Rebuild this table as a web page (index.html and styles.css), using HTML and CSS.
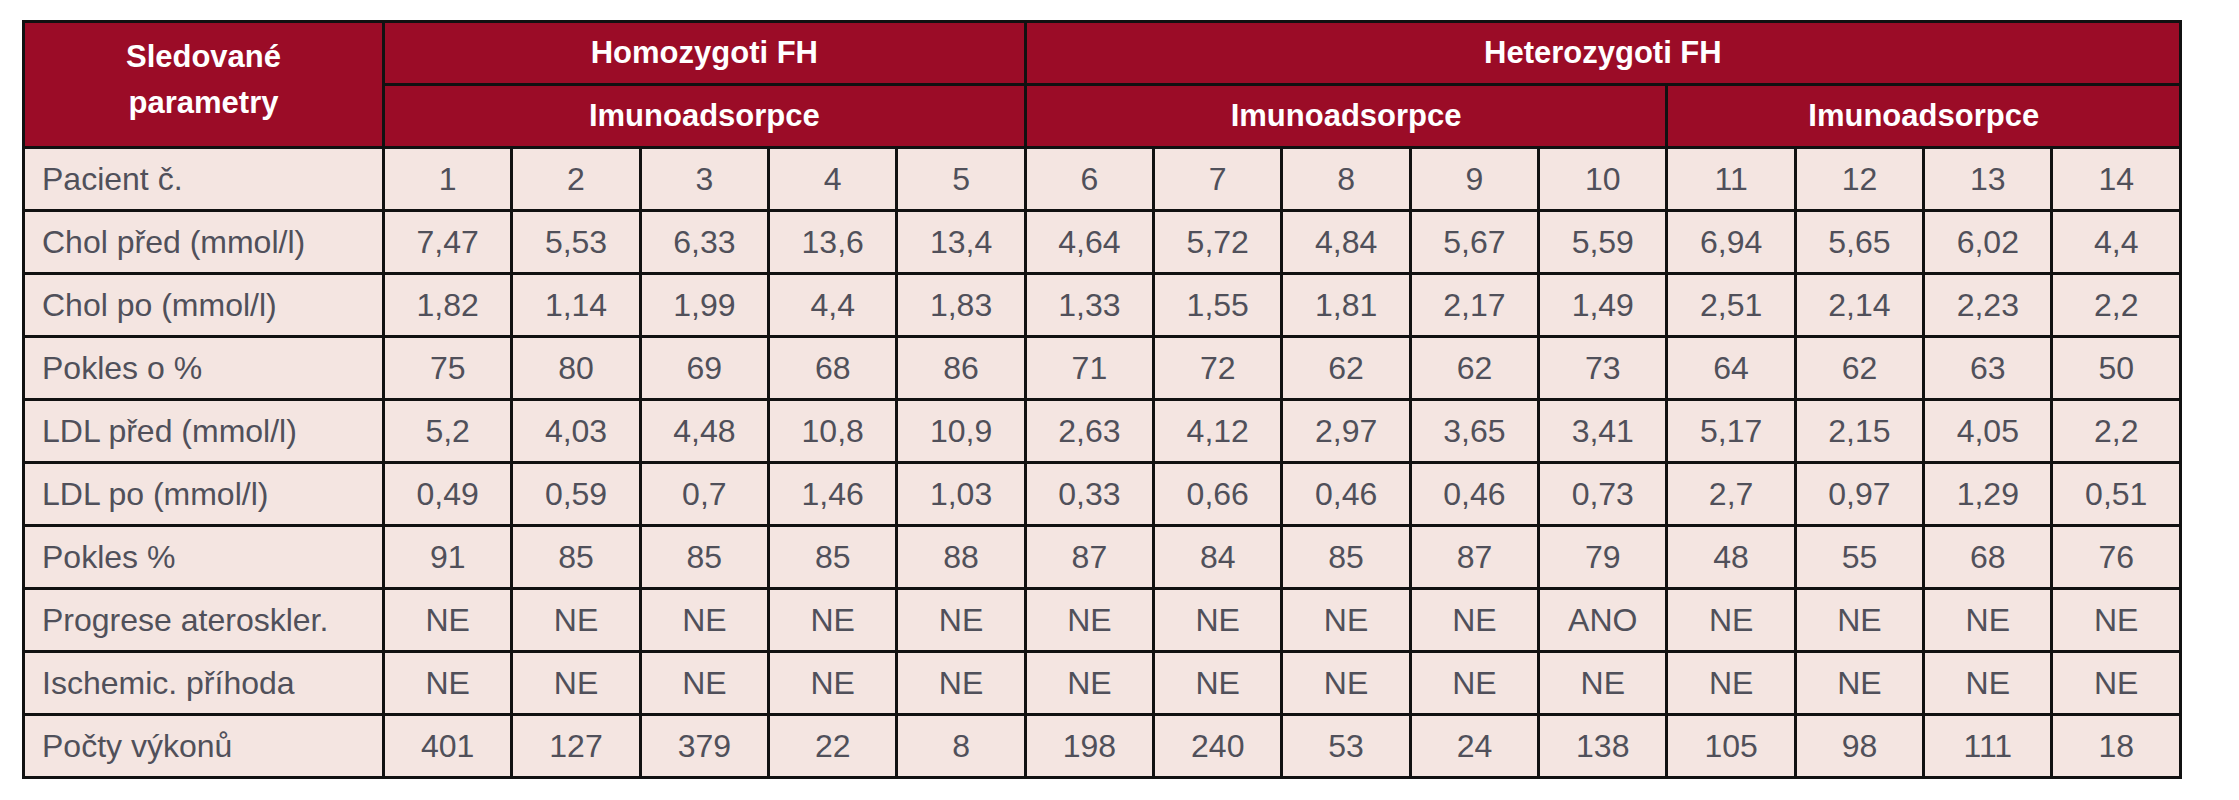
FILE: index.html
```html
<!DOCTYPE html>
<html lang="cs">
<head>
<meta charset="utf-8">
<link rel="stylesheet" href="styles.css">
</head>
<body>
<table class="data">
  <colgroup>
    <col class="c-label">
    <col span="14">
  </colgroup>
  <thead>
    <tr>
      <th rowspan="2" class="h-label">Sledované<br>parametry</th>
      <th colspan="5">Homozygoti FH</th>
      <th colspan="9">Heterozygoti FH</th>
    </tr>
    <tr>
      <th colspan="5">Imunoadsorpce</th>
      <th colspan="5">Imunoadsorpce</th>
      <th colspan="4">Imunoadsorpce</th>
    </tr>
  </thead>
  <tbody>
    <tr><td>Pacient č.</td><td>1</td><td>2</td><td>3</td><td>4</td><td>5</td><td>6</td><td>7</td><td>8</td><td>9</td><td>10</td><td>11</td><td>12</td><td>13</td><td>14</td></tr>
    <tr><td>Chol před (mmol/l)</td><td>7,47</td><td>5,53</td><td>6,33</td><td>13,6</td><td>13,4</td><td>4,64</td><td>5,72</td><td>4,84</td><td>5,67</td><td>5,59</td><td>6,94</td><td>5,65</td><td>6,02</td><td>4,4</td></tr>
    <tr><td>Chol po (mmol/l)</td><td>1,82</td><td>1,14</td><td>1,99</td><td>4,4</td><td>1,83</td><td>1,33</td><td>1,55</td><td>1,81</td><td>2,17</td><td>1,49</td><td>2,51</td><td>2,14</td><td>2,23</td><td>2,2</td></tr>
    <tr><td>Pokles o %</td><td>75</td><td>80</td><td>69</td><td>68</td><td>86</td><td>71</td><td>72</td><td>62</td><td>62</td><td>73</td><td>64</td><td>62</td><td>63</td><td>50</td></tr>
    <tr><td>LDL před (mmol/l)</td><td>5,2</td><td>4,03</td><td>4,48</td><td>10,8</td><td>10,9</td><td>2,63</td><td>4,12</td><td>2,97</td><td>3,65</td><td>3,41</td><td>5,17</td><td>2,15</td><td>4,05</td><td>2,2</td></tr>
    <tr><td>LDL po (mmol/l)</td><td>0,49</td><td>0,59</td><td>0,7</td><td>1,46</td><td>1,03</td><td>0,33</td><td>0,66</td><td>0,46</td><td>0,46</td><td>0,73</td><td>2,7</td><td>0,97</td><td>1,29</td><td>0,51</td></tr>
    <tr><td>Pokles %</td><td>91</td><td>85</td><td>85</td><td>85</td><td>88</td><td>87</td><td>84</td><td>85</td><td>87</td><td>79</td><td>48</td><td>55</td><td>68</td><td>76</td></tr>
    <tr><td>Progrese ateroskler.</td><td>NE</td><td>NE</td><td>NE</td><td>NE</td><td>NE</td><td>NE</td><td>NE</td><td>NE</td><td>NE</td><td>ANO</td><td>NE</td><td>NE</td><td>NE</td><td>NE</td></tr>
    <tr><td>Ischemic. příhoda</td><td>NE</td><td>NE</td><td>NE</td><td>NE</td><td>NE</td><td>NE</td><td>NE</td><td>NE</td><td>NE</td><td>NE</td><td>NE</td><td>NE</td><td>NE</td><td>NE</td></tr>
    <tr><td>Počty výkonů</td><td>401</td><td>127</td><td>379</td><td>22</td><td>8</td><td>198</td><td>240</td><td>53</td><td>24</td><td>138</td><td>105</td><td>98</td><td>111</td><td>18</td></tr>
  </tbody>
</table>
</body>
</html>
```
FILE: styles.css
```css
html, body {
  margin: 0;
  background: #ffffff;
}
body {
  padding: 20px 0 0 22px;
  font-family: "Liberation Sans", Arial, sans-serif;
}
.data {
  border-collapse: collapse;
  table-layout: fixed;
  width: 2160px;
  border: 3px solid #111111;
}
.c-label {
  width: 360px;
}
.data th,
.data td {
  border: 3px solid #111111;
  height: 60px;
  padding: 0;
  text-align: center;
  vertical-align: middle;
  white-space: nowrap;
  overflow: hidden;
}
.data th {
  background: #9b0c27;
  color: #ffffff;
  font-weight: 700;
  font-size: 31px;
  line-height: 46px;
}
.data th.h-label {
  padding-bottom: 10px;
}
.data td {
  background: #f4e5e1;
  color: #50505a;
  font-size: 32px;
}
.data tbody td:first-child {
  text-align: left;
  padding-left: 17px;
}
```
